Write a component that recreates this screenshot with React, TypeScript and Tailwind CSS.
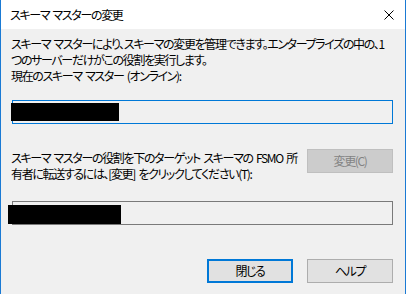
import React from 'react';

const font = "font-['Yu_Gothic_UI','Noto_Sans_CJK_JP',sans-serif] [font-feature-settings:'palt'] text-[12px] leading-[16px] tracking-[-1.35px] [word-spacing:2px] text-black";

const CloseIcon: React.FC = () => (
    <svg width="10" height="10" viewBox="0 0 10 10" className="block">
        <path d="M0.5 0.5L9.5 9.5M9.5 0.5L0.5 9.5" stroke="#000" strokeWidth="1" />
    </svg>
);

const Button: React.FC<{ children: React.ReactNode; primary?: boolean; disabled?: boolean }> = ({ children, primary, disabled }) => {
    let cls = 'border border-[#adadad] bg-[#e1e1e1] text-black';
    if (primary) cls = 'border-2 border-[#0078d7] bg-[#e1e1e1] text-black';
    if (disabled) cls = 'border border-[#bfbfbf] bg-[#cccccc] text-[#838383]';
    return (
        <button disabled={disabled} className={`w-[86px] h-[24px] shrink-0 flex items-center justify-center ${cls}`}>
            {children}
        </button>
    );
};

export default function App() {
    return (
        <div className={`w-[408px] h-[294px] bg-white ${font}`}>
            <div className="w-[406px] h-[294px] border-x border-[#1a7ad4] flex flex-col">
                {/* title bar */}
                <div className="h-[29px] bg-white flex items-center justify-between pl-[9px] pr-[11px]">
                    <span className="pt-[1px]">スキーマ マスターの変更</span>
                    <CloseIcon />
                </div>

                <div className="flex-1 bg-[#f0f0f0] pl-[10px] pr-[12px] pt-[7px]">
                    <p className="whitespace-nowrap">
                        スキーマ マスターにより、スキーマの変更を管理できます。エンタープライズの中の、1
                        <br />
                        つのサーバーだけがこの役割を実行します。
                    </p>
                    <p className="whitespace-nowrap">現在のスキーマ マスター (オンライン):</p>

                    <div className="mt-[16px] ml-[1px] h-[24px] border border-[#0078d7] flex items-center">
                        <div className="-ml-[2px] w-[108px] h-[18px] bg-black" />
                    </div>

                    <div className="mt-[25px] flex items-start justify-between">
                        <p className="whitespace-nowrap pt-[1px]">
                            スキーマ マスターの役割を下のターゲット スキーマの FSMO 所
                            <br />
                            有者に転送するには、[変更] をクリックしてください(T):
                        </p>
                        <Button disabled>変更(C)</Button>
                    </div>

                    <div className="mt-[19px] ml-[1px] h-[24px] border border-[#7a7a7a] flex items-center">
                        <div className="-ml-[5px] mt-[2px] w-[113px] h-[19px] bg-black" />
                    </div>

                    <div className="mt-[34px] flex justify-end gap-[14px]">
                        <Button primary>閉じる</Button>
                        <Button>ヘルプ</Button>
                    </div>
                </div>
            </div>
        </div>
    );
}
